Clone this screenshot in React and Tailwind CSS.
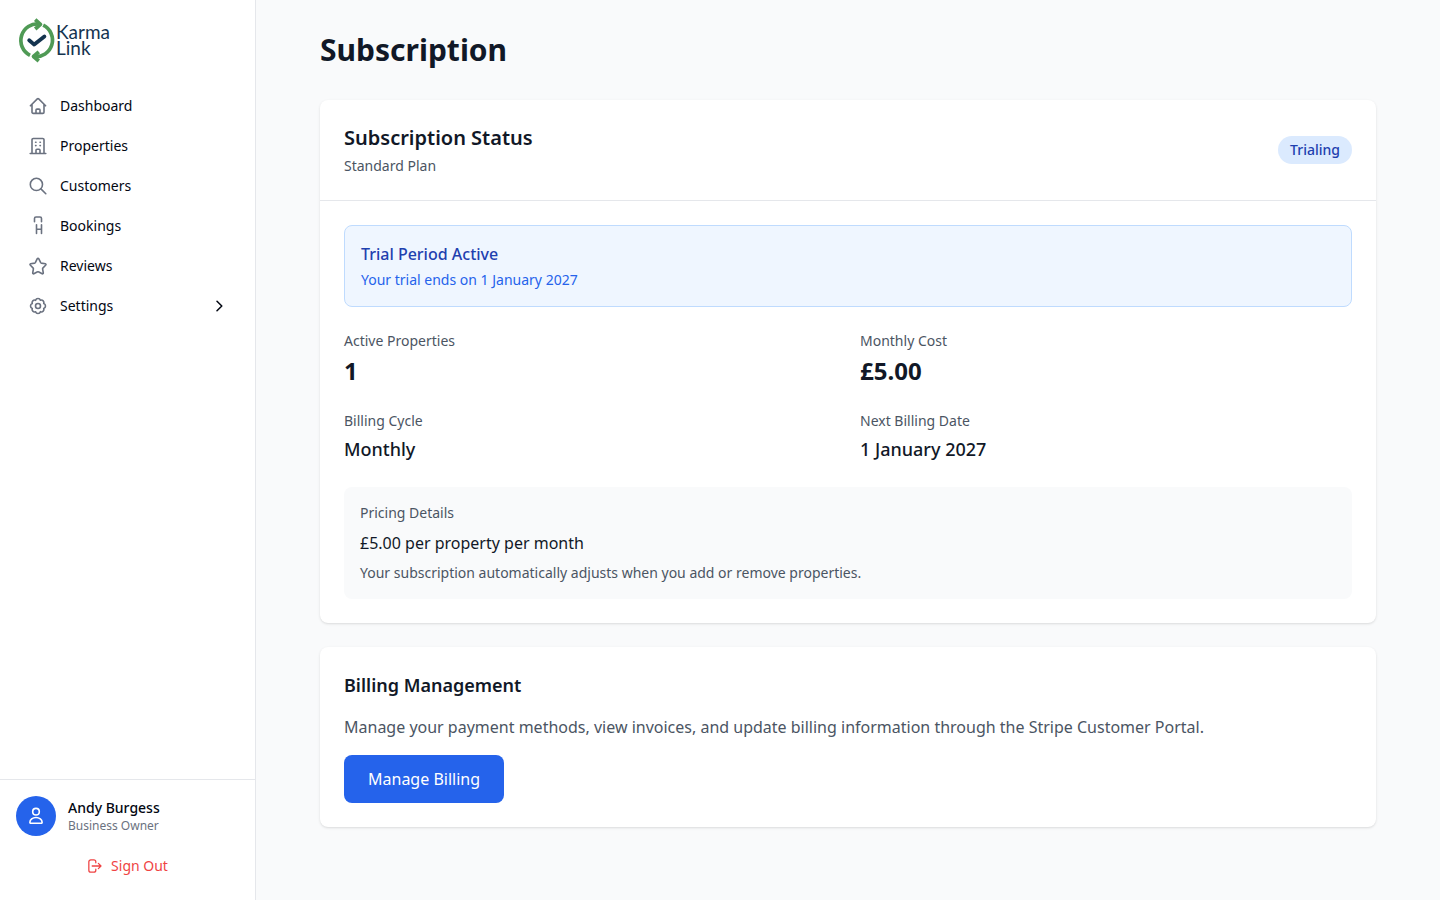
import { useState } from 'react';

const Icon = ({ children, className = 'size-5 text-[#6b7280]' }) => (
    <svg
        viewBox="0 0 20 20"
        fill="none"
        stroke="currentColor"
        strokeWidth="1.6"
        strokeLinecap="round"
        strokeLinejoin="round"
        className={`shrink-0 ${className}`}
        aria-hidden="true"
    >
        {children}
    </svg>
);

const HomeIcon = () => (
    <Icon>
        <path d="M2.4 9.8 9.3 2.9a1 1 0 0 1 1.4 0l6.9 6.9M4 8.5v7.700a1.200 1.200 0 0 0 1.200 1.200h9.600a1.200 1.200 0 0 0 1.200-1.200V8.500M8 17.300v-3.200a1 1 0 0 1 1-1h2a1 1 0 0 1 1 1v3.200" />
    </Icon>
);

const BuildingIcon = () => (
    <Icon>
        <path d="M2.200 17.500h15.600M4 17.300V3.800a1.300 1.300 0 0 1 1.300-1.300h9.400A1.300 1.300 0 0 1 16 3.800v13.500M8 17.300v-3a1 1 0 0 1 1-1h2a1 1 0 0 1 1 1v3M7.600 6.200h.4M12 6.200h.4M7.600 9.600h.4M12 9.600h.4" />
    </Icon>
);

const SearchIcon = () => (
    <Icon>
        <circle cx="8.4" cy="8.4" r="6.1" />
        <path d="m12.9 12.9 4.9 4.8" />
    </Icon>
);

const BookingIcon = () => (
    <Icon>
        <path d="M6.5 5.8V2.5A1.500 1.500 0 0 1 8 1h4a1.500 1.500 0 0 1 1.500 1.500v3.300M8.500 8.800v8.700M13.500 8.800v8.700M8.500 13.300h5" />
    </Icon>
);

const StarIcon = () => (
    <Icon>
        <path d="M9.3 2.6a.8.8 0 0 1 1.4 0l2 4.1a.8.8 0 0 0 .6.4l4.100.6a.8.8 0 0 1 .4 1.300l-3 3.100a.8.8 0 0 0-.2.7l.7 4.200a.8.8 0 0 1-1.100.8l-3.800-2a.8.8 0 0 0-.8 0l-3.800 2a.8.8 0 0 1-1.100-.8l.7-4.200a.8.8 0 0 0-.2-.7l-3-3.100a.8.8 0 0 1 .4-1.300l4.100-.6a.8.8 0 0 0 .6-.4z" />
    </Icon>
);

const GearIcon = () => (
    <Icon>
        <circle cx="10" cy="10" r="2.5" />
        <path d="M7.6 4.3a2.5 2.5 0 0 1 4.8 0 2.5 2.5 0 0 1 3.3 3.3 2.5 2.5 0 0 1 0 4.8 2.5 2.5 0 0 1-3.3 3.3 2.5 2.5 0 0 1-4.8 0 2.5 2.5 0 0 1-3.3-3.3 2.5 2.5 0 0 1 0-4.8 2.5 2.5 0 0 1 3.3-3.3z" />
    </Icon>
);

const Logo = () => (
    <svg viewBox="0 0 96 48" className="h-12 w-24" role="img" aria-label="Karma Link">
        <g fill="none" stroke="#4f9a55" strokeWidth="3.7">
            <path d="M14 39.300A16.600 16.600 0 0 1 23.500 8" />
            <path d="M27.200 9.200A16.600 16.600 0 0 1 18 40.600" />
            <path d="m19.200 3.700 5.300 4.600-5.300 4.700" strokeLinejoin="round" />
            <path d="m22.800 35.800-5.300 4.700 5.300 4.500" strokeLinejoin="round" />
        </g>
        <path d="m13.200 24.300 5 4.300 10.200-8.200" fill="none" stroke="#14344f" strokeWidth="3.800" strokeLinecap="round" strokeLinejoin="round" />
        <g fill="#14344f" fontFamily="Lato, sans-serif" fontSize="19">
            <text x="40" y="23">Karma</text>
            <text x="40" y="39">Link</text>
        </g>
    </svg>
);

const navLinks = [
    { href: '#dashboard', icon: <HomeIcon />, label: 'Dashboard' },
    { href: '#properties', icon: <BuildingIcon />, label: 'Properties' },
    { href: '#customers', icon: <SearchIcon />, label: 'Customers' },
    { href: '#bookings', icon: <BookingIcon />, label: 'Bookings' },
    { href: '#reviews', icon: <StarIcon />, label: 'Reviews' },
];

const Sidebar = () => {
    const [settingsOpen, setSettingsOpen] = useState(false);

    return (
        <aside className="flex flex-col w-64 bg-white border-r border-[#e5e7eb] shrink-0">
            <div className="p-4">
                <Logo />
            </div>

            {/* Navigation Links */}
            <nav className="flex-1 px-4 pt-2 space-y-1 text-sm text-[#030712]">
                {navLinks.map((link) => (
                    <a key={link.href} href={link.href} className="flex items-center gap-3 px-3 py-2 rounded-lg hover:bg-gray-50">
                        {link.icon}
                        {link.label}
                    </a>
                ))}
                <button
                    type="button"
                    aria-expanded={settingsOpen}
                    onClick={() => setSettingsOpen(!settingsOpen)}
                    className="flex items-center w-full gap-3 px-3 py-2 rounded-lg hover:bg-gray-50"
                >
                    <GearIcon />
                    Settings
                    <Icon className={`ml-auto size-4 ${settingsOpen ? 'rotate-90' : ''}`}>
                        <path d="m7.500 4 6 6-6 6" strokeWidth="1.900" />
                    </Icon>
                </button>
            </nav>

            {/* User Profile Summary */}
            <div className="p-4 border-t border-[#e5e7eb]">
                <div className="flex items-center gap-3">
                    <div className="flex items-center justify-center text-white bg-[#2563eb] rounded-full size-10">
                        <Icon className="size-5">
                            <circle cx="10" cy="5.700" r="3.300" />
                            <path d="M3.900 16.300a6.100 4.800 0 0 1 12.200 0 .8.8 0 0 1-.8.9H4.700a.8.8 0 0 1-.8-.9z" />
                        </Icon>
                    </div>
                    <div>
                        <p className="text-sm font-medium text-[#030712]">Andy Burgess</p>
                        <p className="text-xs text-[#6b7280]">Business Owner</p>
                    </div>
                </div>
                <button
                    type="button"
                    className="flex items-center justify-center w-full gap-2 py-2 mt-3 text-sm text-[#ef4444] rounded-lg hover:bg-red-50"
                >
                    <Icon className="size-4">
                        <path d="M11 6V4.800a2.500 2.500 0 0 0-2.500-2.500H4.800a2.500 2.500 0 0 0-2.500 2.500v10.400a2.500 2.500 0 0 0 2.500 2.500h3.700a2.500 2.500 0 0 0 2.500-2.500V14M6.500 10h11M14.200 6.700l3.300 3.300-3.300 3.300" />
                    </Icon>
                    Sign Out
                </button>
            </div>
        </aside>
    );
};

const Stat = ({ label, value, valueClass }) => (
    <div>
        <dt className="text-sm text-[#4b5563]">{label}</dt>
        <dd className={`mt-1 ${valueClass}`}>{value}</dd>
    </div>
);

const App = () => {
    return (
        <div className="flex min-h-screen bg-[#f9fafb] font-['Noto_Sans',sans-serif] text-[#111827] antialiased">
            <Sidebar />

            <main className="flex-1 px-16 py-8">
                <h1 className="mb-8 text-3xl font-bold">Subscription</h1>

                <section className="mb-6 bg-white rounded-lg shadow-sm">
                    <div className="flex items-center justify-between p-6 border-b border-[#e5e7eb]">
                        <div>
                            <h2 className="text-xl font-semibold">Subscription Status</h2>
                            <p className="mt-1 text-sm text-[#4b5563]">Standard Plan</p>
                        </div>
                        <span className="px-3 py-1 text-sm font-medium text-[#1e40af] bg-[#dbeafe] rounded-full">Trialing</span>
                    </div>

                    <div className="p-6 space-y-6">
                        <div className="p-4 bg-[#eff6ff] border border-[#bfdbfe] rounded-lg">
                            <p className="font-medium text-[#1e40af]">Trial Period Active</p>
                            <p className="mt-1 text-sm text-[#2563eb]">Your trial ends on 1 January 2027</p>
                        </div>

                        <dl className="grid grid-cols-2 gap-6">
                            <Stat label="Active Properties" value="1" valueClass="text-2xl font-bold" />
                            <Stat label="Monthly Cost" value="£5.00" valueClass="text-2xl font-bold" />
                            <Stat label="Billing Cycle" value="Monthly" valueClass="text-lg font-medium" />
                            <Stat label="Next Billing Date" value="1 January 2027" valueClass="text-lg font-medium" />
                        </dl>

                        <div className="p-4 space-y-2 bg-[#f9fafb] rounded-lg">
                            <p className="text-sm text-[#4b5563]">Pricing Details</p>
                            <p>£5.00 per property per month</p>
                            <p className="text-sm text-[#4b5563]">Your subscription automatically adjusts when you add or remove properties.</p>
                        </div>
                    </div>
                </section>

                <section className="p-6 bg-white rounded-lg shadow-sm">
                    <h2 className="mb-4 text-lg font-semibold">Billing Management</h2>
                    <p className="mb-4 text-[#4b5563]">
                        Manage your payment methods, view invoices, and update billing information through the Stripe Customer Portal.
                    </p>
                    <button type="button" className="px-6 py-3 text-white bg-[#2563eb] rounded-lg hover:bg-[#1d4ed8]">
                        Manage Billing
                    </button>
                </section>
            </main>
        </div>
    );
};

export default App;
